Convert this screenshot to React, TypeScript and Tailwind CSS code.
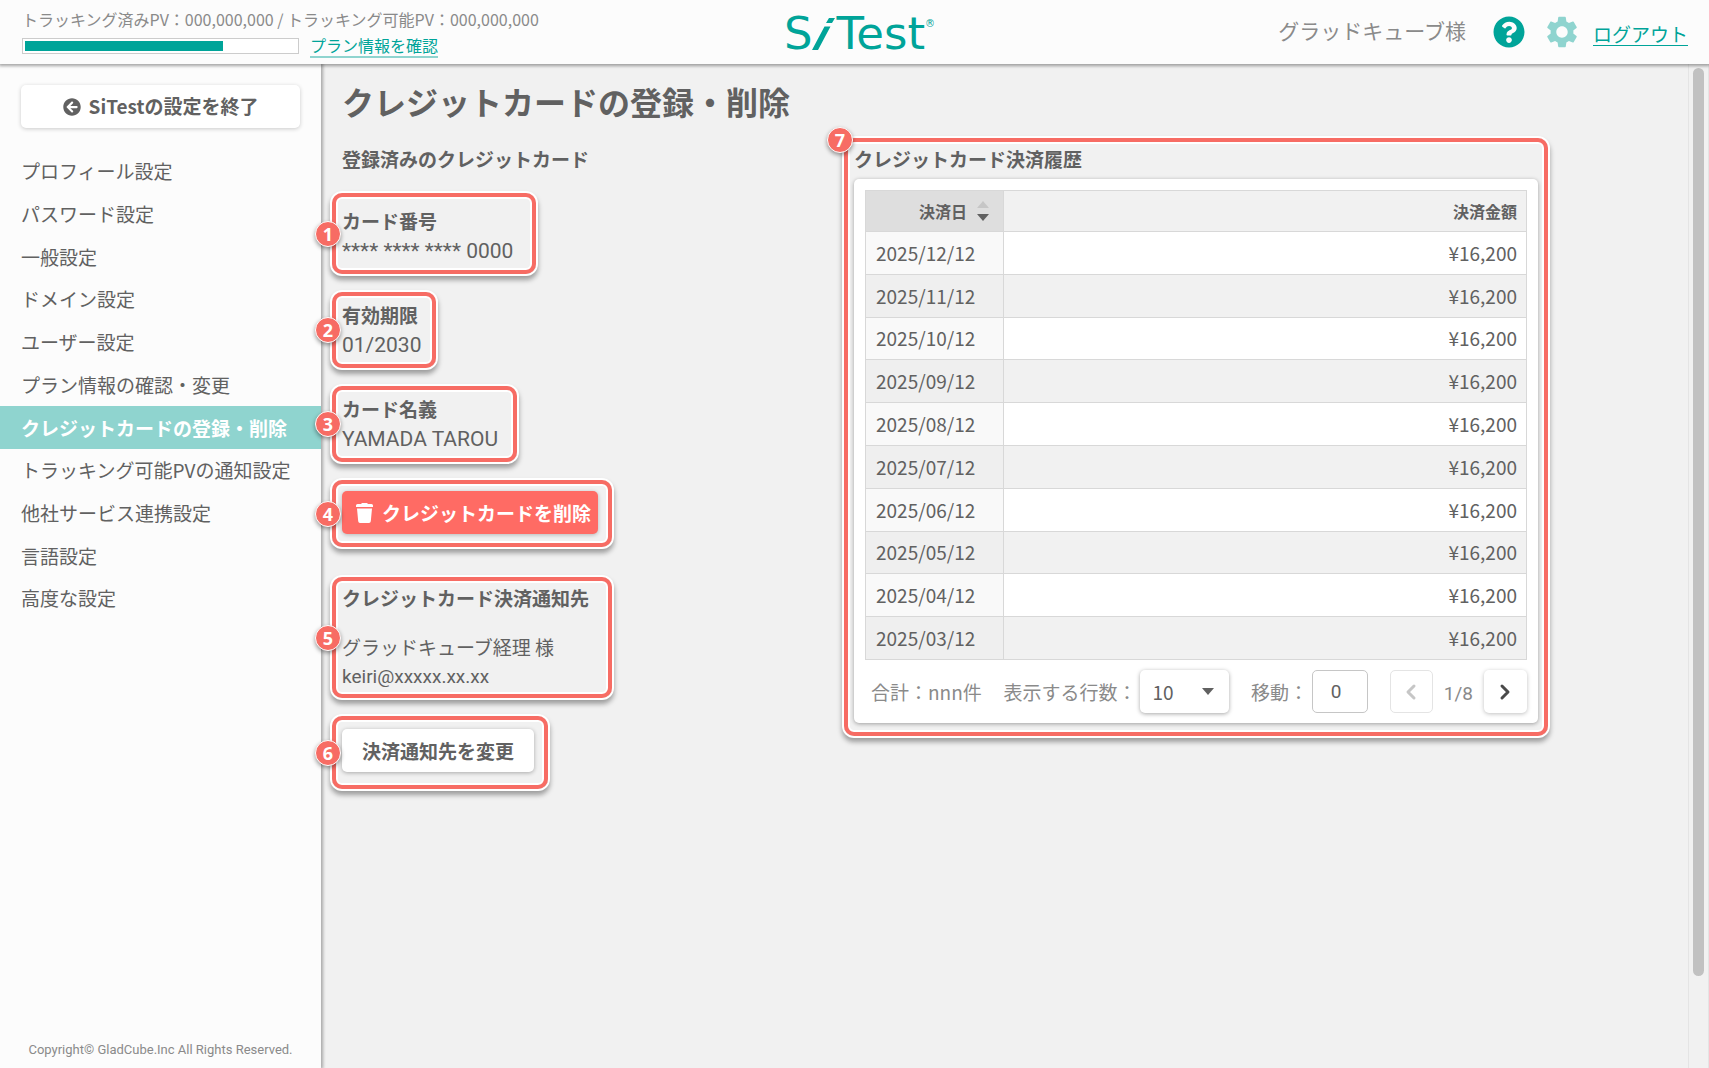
import type { ReactNode } from "react"
import clsx from "clsx"
import { FaArrowCircleLeft, FaQuestionCircle } from "react-icons/fa"
import { MdSettings } from "react-icons/md"
import { ChevronLeft, ChevronRight } from "lucide-react"

const menu = [
    "プロフィール設定",
    "パスワード設定",
    "一般設定",
    "ドメイン設定",
    "ユーザー設定",
    "プラン情報の確認・変更",
    "クレジットカードの登録・削除",
    "トラッキング可能PVの通知設定",
    "他社サービス連携設定",
    "言語設定",
    "高度な設定",
]
const activeMenu = "クレジットカードの登録・削除"

const payments = ["2025/12/12", "2025/11/12", "2025/10/12", "2025/09/12", "2025/08/12", "2025/07/12", "2025/06/12", "2025/05/12", "2025/04/12", "2025/03/12"]

function Logo(){
    return<>
        <a href="#" className="flex items-center h-16 pt-1 text-[#00a499] font-['DejaVu_Sans',sans-serif] text-[45px] leading-[60px]">
            <span>S</span>
            <svg className="w-6 h-8" viewBox="0 0 24 32" aria-hidden="true">
                <path d="M17 0h6l-3 5h-6zM12.500 8.500h6L6 32H0z" fill="currentColor" />
            </svg>
            <span>Test</span>
            <span className="w-0 h-8 text-[10px] leading-3">®</span>
        </a>
    </>
}

function Header(){
    return<>
        <header className="relative z-20 grid grid-cols-[1fr_auto_1fr] items-center h-16 shrink-0 bg-[#fcfcfc] shadow-[0_1px_3px_1px_rgba(0,0,0,0.35)]">
            <div className="pl-[22px] text-[16px] leading-6 text-[#8a8a8a] whitespace-nowrap">
                <p>トラッキング済みPV：000,000,000 / トラッキング可能PV：000,000,000</p>
                <div className="flex items-center gap-[11px] mt-[3px]">
                    <div className="w-[277px] h-4 p-[2px] border border-[#cccccc] bg-white">
                        <div className="w-[73%] h-full bg-[#00a499]"></div>
                    </div>
                    <a href="#" className="leading-[22px] text-[#00a499] border-b-2 border-[#8fd4cf]">プラン情報を確認</a>
                </div>
            </div>
            <Logo />
            <div className="flex items-center justify-end pr-[21px] text-[#00a499]">
                <p className="pb-1 text-[21px] leading-7 text-[#8a8a8a]">グラッドキューブ様</p>
                <button type="button" aria-label="ヘルプ" className="ml-[27px]"><FaQuestionCircle size={32} /></button>
                <button type="button" aria-label="設定" className="ml-[18px] text-[#8fd4cf]"><MdSettings size={38} /></button>
                <a href="#" className="ml-[12px] mt-1 text-[19px] leading-[22px] border-b border-[#00a499]">ログアウト</a>
            </div>
        </header>
    </>
}

function Sidebar(){
    return<>
        <aside className="flex flex-col w-[321px] shrink-0 bg-[#fcfcfc] shadow-[1px_0_3px_1px_rgba(0,0,0,0.3)]">
            <button type="button" className="flex items-center justify-center gap-2 mx-[21px] mt-[21px] h-[43px] rounded-[5px] bg-white text-[19px] font-bold shadow-[0_1px_4px_rgba(0,0,0,0.2)]">
                <FaArrowCircleLeft size={18} />
                SiTestの設定を終了
            </button>
            <nav className="flex flex-col mt-[22px] h-[470px]">
                {menu.map((item) => (
                    <a key={item} href="#" className={clsx("flex flex-1 items-center pl-[21px] text-[19px]", item === activeMenu && "bg-[#8fd4cf] text-white font-bold")}>{item}</a>
                ))}
            </nav>
            <p className="mt-auto mb-2 text-center text-[13px] leading-5 text-[#8a8a8a] font-[Roboto,sans-serif]">Copyright© GladCube.Inc All Rights Reserved.</p>
        </aside>
    </>
}

// red frame with a numbered badge
function Marked({ no, className, corner, children }: { no: number, className?: string, corner?: boolean, children: ReactNode }){
    return<>
        <section className={clsx("relative border-4 border-[#f76c64] rounded-[10px] px-[6px] shadow-[0_0_0_2px_#fff,inset_0_0_0_2px_#fff,0_4px_5px_2px_rgba(0,0,0,0.35)]", className)}>
            <span className={clsx("absolute -left-[21px] flex items-center justify-center size-[26px] rounded-full border border-white bg-[#f76c64] text-white text-[18px] leading-none font-bold font-['Noto_Sans',sans-serif] shadow-[0_2px_4px_rgba(0,0,0,0.4)]", corner ? "-top-[15px]" : "top-1/2 -translate-y-1/2")}>{no}</span>
            {children}
        </section>
    </>
}

function CardInfo(){
    return<>
        <div className="flex flex-col items-start gap-[18px] pt-[7px] text-[19px] leading-7 whitespace-nowrap">
            <h2 className="pl-[10px] pb-[2px] font-bold">登録済みのクレジットカード</h2>
            <Marked no={1} className="w-[204px] pt-[10px] pb-[5px]">
                <h3 className="font-bold">カード番号</h3>
                <p className="pt-[2px] text-[21px] font-[Roboto,sans-serif]">**** **** **** 0000</p>
            </Marked>
            <Marked no={2} className="w-[104px] pt-[5px] pb-[5px]">
                <h3 className="font-bold">有効期限</h3>
                <p className="pt-[2px] text-[21px] font-[Roboto,sans-serif]">01/2030</p>
            </Marked>
            <Marked no={3} className="w-[185px] pt-[5px] pb-[5px]">
                <h3 className="font-bold">カード名義</h3>
                <p className="pt-[2px] text-[21px] font-[Roboto,sans-serif]">YAMADA TAROU</p>
            </Marked>
            <Marked no={4} className="w-[280px] pt-[7px] pb-[9px]">
                <button type="button" className="flex items-center gap-[9px] w-[256px] h-[43px] pl-[14px] rounded-[5px] bg-[#ff6b64] text-white font-bold shadow-[0_1px_4px_rgba(0,0,0,0.25)]">
                    <svg className="w-[17px] h-5" viewBox="0 0 17 20" fill="currentColor" aria-hidden="true">
                        <path d="M6 0h5l1 1h3.500q1.500 0 1.500 1.500V4H0V2.500Q0 1 1.500 1H5zM1 5.500h15L14.800 18.300Q14.600 20 13 20H4Q2.400 20 2.200 18.300z" />
                    </svg>
                    クレジットカードを削除
                </button>
            </Marked>
            <Marked no={5} className="w-[280px] mt-3 pt-[3px] pb-[3px]">
                <h3 className="font-bold">クレジットカード決済通知先</h3>
                <p className="mt-[21px]">グラッドキューブ経理 様</p>
                <p className="pt-[2px] font-[Roboto,sans-serif]">keiri@xxxxx.xx.xx</p>
            </Marked>
            <Marked no={6} className="w-[216px] pt-[9px] pb-[13px]">
                <button type="button" className="w-[192px] h-[43px] rounded-[5px] bg-white font-bold shadow-[0_1px_4px_rgba(0,0,0,0.3)]">決済通知先を変更</button>
            </Marked>
        </div>
    </>
}

function Pager(){
    return<>
        <div className="flex items-center justify-between mt-[10px] pl-[6px] text-[19px] leading-7 text-[#8a8a8a] whitespace-nowrap">
            <p>合計：nnn件</p>
            <div className="flex items-center gap-1">
                <label htmlFor="rows">表示する行数：</label>
                <div className="relative">
                    <select id="rows" defaultValue="10" className="w-[89px] h-[43px] pl-3 rounded-[5px] appearance-none bg-white text-[#616161] shadow-[0_1px_4px_rgba(0,0,0,0.35)]">
                        <option>10</option>
                        <option>20</option>
                        <option>50</option>
                    </select>
                    <svg className="absolute right-[15px] top-[18px] w-3 h-[7px] pointer-events-none" viewBox="0 0 12 7" aria-hidden="true">
                        <path d="M0 0h12L6 7z" fill="#616161" />
                    </svg>
                </div>
            </div>
            <div className="flex items-center gap-1">
                <label htmlFor="page">移動：</label>
                <input id="page" type="text" defaultValue="0" className="w-14 h-[43px] pr-2 rounded-[5px] border border-[#c6c6c6] bg-white text-center text-[#616161] font-[Roboto,sans-serif]" />
            </div>
            <div className="flex items-center gap-[11px]">
                <button type="button" aria-label="前へ" disabled className="flex items-center justify-center w-[43px] h-[43px] rounded-[5px] border border-[#e4e4e4] text-[#c6c6c6]"><ChevronLeft size={24} strokeWidth={3} /></button>
                <span className="pt-1 font-[Roboto,sans-serif]">1/8</span>
                <button type="button" aria-label="次へ" className="flex items-center justify-center w-[43px] h-[43px] rounded-[5px] bg-white text-[#4a4a4a] shadow-[0_1px_4px_rgba(0,0,0,0.25)]"><ChevronRight size={24} strokeWidth={3} /></button>
            </div>
        </div>
    </>
}

function History(){
    return<>
        <Marked no={7} corner className="self-start pt-[3px] pb-[9px]">
            <h2 className="text-[19px] leading-7 font-bold">クレジットカード決済履歴</h2>
            <div className="mt-[6px] p-[11px] pb-[10px] rounded-[5px] bg-white shadow-[0_1px_4px_rgba(0,0,0,0.35)]">
                <table className="w-full h-[470px] border-collapse text-right">
                    <thead>
                        <tr className="h-[41px] bg-[#f1f1f1] text-[16px] leading-6">
                            <th className="w-[138px] border border-[#d8d8d8] bg-[#dedede] font-bold">
                                <div className="flex items-center justify-end gap-[10px] pr-[14px]">
                                    決済日
                                    <svg className="w-3 h-5" viewBox="0 0 12 20" aria-hidden="true">
                                        <path d="M0 7h12L6 0z" fill="#c6c6c6" />
                                        <path d="M0 13h12L6 20z" fill="#616161" />
                                    </svg>
                                </div>
                            </th>
                            <th className="pr-[9px] border border-[#d8d8d8] font-bold">決済金額</th>
                        </tr>
                    </thead>
                    <tbody className="text-[19px] leading-7">
                        {payments.map((date) => (
                            <tr key={date} className="group even:bg-[#f1f1f1]">
                                <td className="pl-[10px] border border-[#d8d8d8] text-left bg-[#f9f9f9] group-even:bg-[#efefef]">{date}</td>
                                <td className="pr-[9px] border border-[#d8d8d8]">¥16,200</td>
                            </tr>
                        ))}
                    </tbody>
                </table>
                <Pager />
            </div>
        </Marked>
    </>
}

export default function App(){
    return<>
        <div className="flex flex-col min-h-screen bg-[#f1f1f1] text-[#616161] font-['Noto_Sans_CJK_JP',sans-serif]">
            <Header />
            <div className="flex flex-1">
                <Sidebar />
                <main className="relative flex-1 min-w-0 pl-[11px] pr-[140px] pt-[19px] pb-10">
                    <h1 className="pl-[10px] text-[32px] leading-9 font-bold">クレジットカードの登録・削除</h1>
                    <div className="grid grid-cols-[8fr_11fr] mt-[19px]">
                        <CardInfo />
                        <History />
                    </div>
                </main>
                <div className="w-[21px] shrink-0 pt-1 pl-1 border-x border-[#e4e4e4]">
                    <div className="w-[11px] h-[908px] rounded-full bg-[#c1c1c1]"></div>
                </div>
            </div>
        </div>
    </>
}
